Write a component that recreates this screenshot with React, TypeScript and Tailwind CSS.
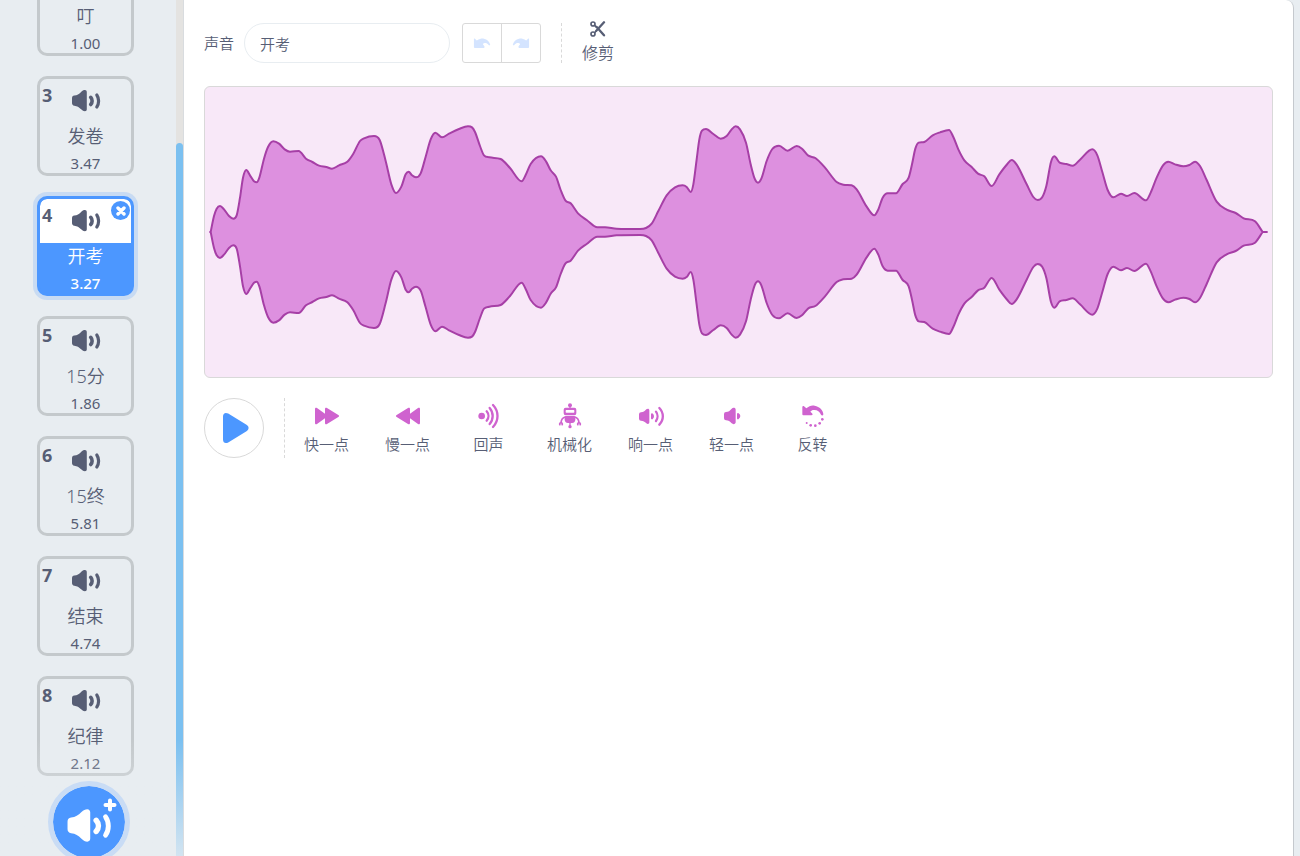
import { useState, type ReactNode } from "react";
import clsx from "clsx";

type Sound = { id?: number; name: string; duration: string };

const sounds: Sound[] = [
    { name: "叮", duration: "1.00" },
    { id: 3, name: "发卷", duration: "3.47" },
    { id: 4, name: "开考", duration: "3.27" },
    { id: 5, name: "15分", duration: "1.86" },
    { id: 6, name: "15终", duration: "5.81" },
    { id: 7, name: "结束", duration: "4.74" },
    { id: 8, name: "纪律", duration: "2.12" },
];

// Upper edge of the wave, the lower one is its mirror around MIDDLE
const MIDDLE = 438;
const envelope: [number, number][] = [
    [20, 438], [30, 390], [38, 368], [48, 360], [60, 370], [75, 390], [88, 398], [98, 388], [108, 335], [117, 275],
    [127, 252], [138, 268], [150, 286], [158, 289], [166, 275], [180, 218], [192, 183], [208, 166], [225, 173], [242, 190],
    [258, 197], [284, 195], [306, 218], [325, 228], [345, 239], [367, 243], [384, 248], [405, 238], [430, 227], [448, 203],
    [468, 165], [480, 157], [510, 150], [527, 162], [545, 225], [562, 295], [576, 321], [592, 302], [605, 265], [614, 257],
    [624, 268], [636, 274], [650, 262], [665, 212], [680, 160], [694, 140], [714, 154], [735, 143], [765, 129], [792, 121],
    [804, 124], [813, 138], [828, 180], [840, 208], [856, 214], [890, 219], [918, 246], [953, 286], [966, 265], [980, 234],
    [1011, 211], [1026, 226], [1040, 253], [1056, 272], [1070, 312], [1084, 343], [1100, 352], [1122, 382], [1148, 402],
    [1180, 424], [1203, 424], [1238, 428], [1308, 429], [1326, 426], [1343, 413], [1363, 375], [1388, 328], [1413, 304],
    [1436, 298], [1448, 303], [1460, 318], [1468, 295], [1478, 220], [1486, 160], [1494, 134], [1506, 129], [1528, 144],
    [1550, 158], [1568, 150], [1583, 130], [1595, 121], [1608, 130], [1626, 170], [1640, 235], [1652, 278], [1662, 290],
    [1672, 278], [1688, 225], [1705, 189], [1725, 179], [1751, 194], [1778, 180], [1794, 188], [1813, 209], [1834, 216],
    [1863, 245], [1898, 288], [1918, 296], [1943, 298], [1958, 310], [1988, 362], [2011, 388], [2023, 370], [2036, 335],
    [2051, 322], [2076, 322], [2096, 294], [2114, 275], [2124, 235], [2134, 188], [2144, 170], [2161, 168], [2186, 148],
    [2208, 139], [2235, 132], [2248, 153], [2263, 190], [2281, 223], [2303, 243], [2322, 263], [2341, 271], [2363, 300],
    [2386, 265], [2410, 234], [2423, 222], [2438, 236], [2468, 295], [2488, 333], [2501, 342], [2515, 333], [2527, 300],
    [2541, 228], [2551, 211], [2567, 230], [2587, 234], [2606, 239], [2628, 221], [2665, 190], [2680, 208], [2695, 258],
    [2711, 312], [2728, 334], [2751, 323], [2769, 330], [2791, 321], [2826, 343], [2840, 320], [2858, 275], [2877, 238],
    [2893, 227], [2913, 235], [2938, 241], [2956, 237], [2973, 227], [2988, 240], [3008, 282], [3038, 347], [3068, 371],
    [3095, 381], [3119, 397], [3153, 406], [3176, 438],
];

// Cubic through the points, flat at the peaks so that they are not overshot
function smooth(points: [number, number][]) {
    const slope = (i: number) => (points[i + 1][1] - points[i][1]) / (points[i + 1][0] - points[i][0]);
    const tangents = points.map((_, i) => {
        if (i === 0) return slope(0);
        if (i === points.length - 1) return slope(i - 1);
        const a = slope(i - 1);
        const b = slope(i);
        if (a * b <= 0) return 0;
        return Math.sign(a) * Math.min(Math.abs(a + b) / 2, 3 * Math.abs(a), 3 * Math.abs(b));
    });
    let d = "";
    for (let i = 1; i < points.length; i++) {
        const [x0, y0] = points[i - 1];
        const [x1, y1] = points[i];
        const h = (x1 - x0) / 3;
        d += `C${x0 + h} ${y0 + tangents[i - 1] * h} ${x1 - h} ${y1 - tangents[i] * h} ${x1} ${y1}`;
    }
    return d;
}

const mirrored = envelope.map(([x, y]): [number, number] => [x, 2 * MIDDLE - y]);
const wavePath = `M16 438H20${smooth(envelope)}H3191M20 438${smooth(mirrored)}`;

function Waveform() {
    return (
        <svg viewBox="3 3 3201 870" preserveAspectRatio="none" className="block h-full w-full" aria-hidden="true">
            <path d={wavePath} fill="#dd90df" stroke="#a63fa6" strokeWidth="6" strokeLinejoin="round" />
        </svg>
    );
}

function SpeakerIcon({ className }: { className?: string }) {
    return (
        <svg viewBox="0 0 30 22" className={className} fill="currentColor" aria-hidden="true">
            <path d="M1 8.2c0-1.6.8-2.5 2.3-2.7 3-.3 4.6-1.4 6.8-3.6C11.5.6 12.5 0 13.9 0c1.2 0 1.9.9 1.9 2v17.2c0 1.1-.7 2-1.9 2-1.4 0-2.4-.6-3.8-1.9-2.2-2.2-3.8-3.3-6.8-3.6C1.8 15.5 1 14.6 1 13z" />
            <path d="M19.7 7.3c1.9 2.1 1.9 5.1 0 7.2" stroke="currentColor" strokeWidth="3.6" strokeLinecap="round" />
            <path d="M25.8 5c2.4 3.4 2.4 8.600 0 12" fill="none" stroke="currentColor" strokeWidth="3.2" strokeLinecap="round" />
        </svg>
    );
}

function UndoIcon({ className }: { className?: string }) {
    return (
        <svg viewBox="0 0 54 34" className={className} fill="currentColor" aria-hidden="true">
            <path d="M2 4c0-2 2-3 4-1l5 5C20 2 27 1 33 2c10 2 17 9 19 17 1 4-3 5-5 2-4-5-9-7-14-5-3 1-4 3-2 5 2 3 6 7 3 9-1 1-2 1-4 1H5c-2 0-3-1-3-3z" />
        </svg>
    );
}

const effects: { label: string; icon: ReactNode }[] = [
    {
        label: "快一点",
        icon: (
            <path d="M6 21c0-4 3-5 6-3l24 17V21c0-4 3-5 6-3l34 21c3 2 3 4 0 6L42 66c-3 2-6 1-6-3V49L12 66c-3 2-6 1-6-3z" />
        ),
    },
    {
        label: "慢一点",
        icon: (
            <path d="M78 21c0-4-3-5-6-3L48 35V21c0-4-3-5-6-3L8 39c-3 2-3 4 0 6l34 21c3 2 6 1 6-3V49l24 17c3 2 6 1 6-3z" />
        ),
    },
    {
        label: "回声",
        icon: (
            <>
                <circle cx="20" cy="42" r="10" />
                <g fill="none" stroke="currentColor" strokeWidth="7" strokeLinecap="round">
                    <path d="M35 28c7 8 7 20 0 28" />
                    <path d="M44 18c12 14 12 34 0 48" />
                    <path d="M54 9c18 19 18 47 0 66" />
                </g>
            </>
        ),
    },
    {
        label: "机械化",
        icon: (
            <>
                <circle cx="42" cy="10" r="6" />
                <path d="M40 10h4v12h-4zM40 58h4v16h-4z" />
                <path fillRule="evenodd" d="M29 17h26q6 0 6 6v11q0 6-6 6H29q-6 0-6-6V23q0-6 6-6zm2 7q-2 0-2 2v4q0 2 2 2h22q2 0 2-2v-4q0-2-2-2z" />
                <path d="M29 42h26q3 0 3 3v7q0 11-10 11H36q-10 0-10-11v-7q0-3 3-3z" />
                <circle cx="42" cy="74" r="5" />
                <path
                    d="M27 45q-11 4-12 17M57 45q11 4 12 17M12 70l-1-4q1-4 4-4t4 4l-1 4M66 70l-1-4q1-4 4-4t4 4l-1 4"
                    fill="none"
                    stroke="currentColor"
                    strokeWidth="5"
                />
            </>
        ),
    },
    {
        label: "响一点",
        icon: (
            <>
                <path d="M6 37q0-6 6-6c7 0 11-4 16-9 4-3 9-2 9 3v36c0 5-5 6-9 3-5-5-9-8-16-8q-6 0-6-6z" />
                <path d="M45 37q6 5 0 12z" stroke="currentColor" strokeWidth="6" strokeLinejoin="round" />
                <g fill="none" stroke="currentColor" strokeWidth="7" strokeLinecap="round">
                    <path d="M57 29c6 8 6 20 0 28" />
                    <path d="M67 18c14 14 14 36 0 50" />
                </g>
            </>
        ),
    },
    {
        label: "轻一点",
        icon: (
            <>
                <path d="M18 36q0-6 6-6c7 0 12-4 17-10 4-4 12-3 12 3v38c0 6-8 7-12 3-5-6-10-9-17-9q-6 0-6-6z" />
                <path d="M60 36q8 6 0 13z" stroke="currentColor" strokeWidth="6" strokeLinejoin="round" />
            </>
        ),
    },
    {
        label: "反转",
        icon: (
            <>
                <path d="M10 15c0-3 3-4 5-2l7 6C30 12 38 9 47 11c15 3 25 13 26 25 0 5-5 6-7 2-4-10-12-15-22-14-4 0-7 2-10 5l5 5c3 3 2 6-2 6H13c-2 0-3-1-3-3z" />
                <circle cx="70" cy="52" r="4" />
                <circle cx="62" cy="64" r="4" />
                <circle cx="49" cy="71" r="4" />
                <circle cx="35" cy="70" r="4" />
                <circle cx="23" cy="63" r="3" />
            </>
        ),
    },
];

function SoundCard({ sound, selected, onSelect }: { sound: Sound; selected: boolean; onSelect: () => void }) {
    return (
        <li className="relative h-[100px] w-[97px] shrink-0">
            <button
                type="button"
                onClick={onSelect}
                className={clsx(
                    "flex h-full w-full flex-col overflow-hidden rounded-[10px] border-3 text-center",
                    selected ? "border-[#4c97ff] bg-[#4c97ff] text-white ring-4 ring-[#4c97ff]/20" : "border-[#c4c9cc] text-[#575e75]"
                )}
            >
                <span className={clsx("flex h-11 w-full shrink-0 text-[#575e75]", selected && "rounded-t-[7px] bg-white")}>
                    <span className="w-[31px] pl-0.5 pt-1 text-left text-lg font-bold leading-6">{sound.id}</span>
                    <SpeakerIcon className="mt-[11px] h-[22px] w-[30px]" />
                </span>
                <span className="w-full text-lg font-[350] leading-[26px]">{sound.name}</span>
                <span className={clsx("w-full text-[15px] leading-7", selected && "font-medium")}>{sound.duration}</span>
            </button>
            {selected && (
                <button
                    type="button"
                    aria-label="删除"
                    className="absolute right-1 top-[5px] flex size-[19px] items-center justify-center rounded-full bg-[#4c97ff] text-white"
                >
                    <svg viewBox="0 0 10 10" className="size-[10px]" stroke="currentColor" strokeWidth="3.4" strokeLinecap="round">
                        <path d="M2 2l6 6M8 2l-6 6" />
                    </svg>
                </button>
            )}
        </li>
    );
}

export default function App() {
    const [selected, setSelected] = useState("开考");
    const [name, setName] = useState("开考");

    return (
        <div className="flex h-screen overflow-hidden bg-[#e8edf1] font-['Noto_Sans','Noto_Sans_CJK_SC',sans-serif] text-[#575e75]">
            {/* Sound list */}
            <aside className="relative flex w-[184px] shrink-0 overflow-hidden border-r border-[#d9dcdf]">
                <ul className="-mt-11 flex flex-1 flex-col gap-5 pl-[37px]">
                    {sounds.map((sound) => (
                        <SoundCard
                            key={sound.name}
                            sound={sound}
                            selected={sound.name === selected}
                            onSelect={() => setSelected(sound.name)}
                        />
                    ))}
                </ul>
                <div className="w-[7px] bg-[#e4e3e1] pt-[143px]">
                    <div className="h-full rounded-t-sm bg-[#7bc0f0]" />
                </div>
                <div className="pointer-events-none absolute inset-x-0 bottom-0 h-[116px] bg-linear-to-t from-[#e8edf1]/80 to-transparent" />
                <button
                    type="button"
                    aria-label="选择一个声音"
                    className="absolute -bottom-[7px] left-12 flex size-[82px] items-center justify-center rounded-full border-5 border-[#c9dcf5] bg-[#4c97ff] bg-clip-padding text-white"
                >
                    <SpeakerIcon className="mt-2 h-[34px] w-[46px]" />
                    <svg viewBox="0 0 14 14" className="absolute right-2 top-3 size-[14px]" stroke="currentColor" strokeWidth="4" strokeLinecap="round">
                        <path d="M7 2.5v9M2.5 7h9" />
                    </svg>
                </button>
            </aside>

            {/* Editor */}
            <main className="mr-1.5 min-w-0 flex-1 rounded-tr-lg border-r border-[#c5c9ce] bg-white px-5 font-[350]">
                <div className="flex h-[86px] items-center">
                    <label htmlFor="sound-name" className="w-10 text-[15px]">
                        声音
                    </label>
                    <input
                        id="sound-name"
                        type="text"
                        value={name}
                        onChange={(e) => setName(e.target.value)}
                        className="h-10 w-[206px] rounded-full border border-[#e8edf1] px-[15px] text-[15px] outline-none"
                    />
                    <div className="ml-3 flex h-10 w-[79px] divide-x divide-[#d9d9d9] rounded-[3px] border border-[#d9d9d9] text-[#d4e4ff]">
                        <button type="button" aria-label="撤销" className="flex flex-1 items-center justify-center">
                            <UndoIcon className="h-[11px] w-[18px]" />
                        </button>
                        <button type="button" aria-label="重做" className="flex flex-1 items-center justify-center">
                            <UndoIcon className="h-[11px] w-[18px] -scale-x-100" />
                        </button>
                    </div>
                    <div className="ml-5 h-10 border-l border-dashed border-[#d9d9d9]" />
                    <button type="button" className="ml-5 flex flex-col items-center gap-1 text-base leading-6">
                        <svg viewBox="0 0 48 48" className="size-4" fill="none" stroke="currentColor" strokeWidth="5" aria-hidden="true">
                            <circle cx="9" cy="9" r="6" />
                            <circle cx="9" cy="39" r="6" />
                            <path d="M14 13l6 6M14 35l5-6" />
                            <path d="M19 29L42 4M20 18l22 25" strokeWidth="7" strokeLinecap="round" />
                        </svg>
                        修剪
                    </button>
                </div>

                <div className="h-[292px] overflow-hidden rounded-md border border-[#d9d9d9] bg-[#f8e8f8]">
                    <Waveform />
                </div>

                {/* Playback and effects */}
                <div className="mt-5 flex h-15">
                    <button
                        type="button"
                        aria-label="播放"
                        className="flex size-15 items-center justify-center rounded-full border border-[#d9d9d9] text-[#4c97ff]"
                    >
                        <svg viewBox="0 0 30 32" className="ml-1 h-8 w-[30px]" fill="currentColor" aria-hidden="true">
                            <path d="M2 4.5C2 1.2 4.5 0 7.2 1.6l18.3 11.2c2.8 1.7 2.8 4.7 0 6.4L7.2 30.4C4.5 32 2 30.8 2 27.5z" />
                        </svg>
                    </button>
                    <div className="ml-5 border-l border-dashed border-[#d9d9d9]" />
                    <div className="ml-px flex">
                        {effects.map(({ label, icon }) => (
                            <button key={label} type="button" className="flex w-[81px] flex-col items-center pt-1 text-[15px]">
                                <svg viewBox="0 0 84 84" className="size-7 text-[#cf63cf]" fill="currentColor" aria-hidden="true">
                                    {icon}
                                </svg>
                                <span className="leading-7">{label}</span>
                            </button>
                        ))}
                    </div>
                </div>
            </main>
        </div>
    );
}
